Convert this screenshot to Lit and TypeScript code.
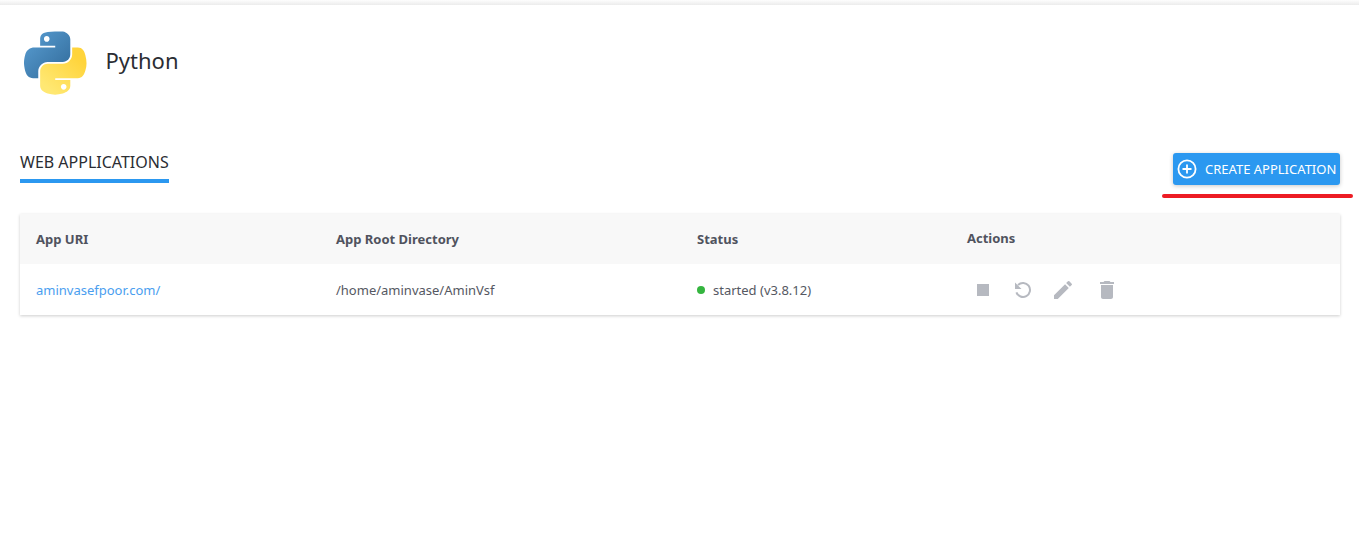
import { LitElement, html, css } from 'lit';
import { customElement } from 'lit/decorators.js';

@customElement('app-root')
export class AppRoot extends LitElement {
  static styles = css`
    :host {
      display: block;
      min-height: 560px;
      background: #fff;
      font-family: 'Noto Sans', sans-serif;
      color: #4a4d57;
    }
    .topbar {
      height: 5px;
      background: linear-gradient(#fdfdfd, #ececec);
    }
    .title-row {
      display: flex;
      align-items: center;
      gap: 18.5px;
      padding: 26px 20px 0 24px;
      height: 64px;
    }
    .logo {
      width: 63px;
      height: 65px;
      display: block;
    }
    .title {
      font-size: 22px;
      color: #2b2d33;
      line-height: 30px;
      margin-top: -7px;
    }
    .section {
      display: flex;
      justify-content: space-between;
      align-items: flex-start;
      padding: 0 19px 0 20px;
      margin-top: 52px;
    }
    .tab {
      margin-top: 4px;
      font-size: 16px;
      line-height: 22px;
      padding-bottom: 6px;
      color: #2b2d33;
      border-bottom: 4px solid #2b98f0;
    }
    .create-wrap {
      position: relative;
      margin-top: 6px;
    }
    .create {
      display: flex;
      align-items: center;
      gap: 8px;
      width: 167px;
      height: 32px;
      box-sizing: border-box;
      padding: 0 0 0 4px;
      border: none;
      border-radius: 3px;
      background: #2b98f0;
      color: #fff;
      font: 13px 'Noto Sans', sans-serif;
      white-space: nowrap;
      box-shadow: 0 1px 4px rgba(0, 0, 0, 0.22);
    }
    .create svg {
      width: 20px;
      height: 20px;
      flex: none;
    }
    .annotation {
      position: absolute;
      left: -11px;
      top: 41px;
      width: 191px;
      height: 4px;
      border-radius: 2px;
      background: #ed1c24;
    }
    .table {
      margin: 29px 19px 0 20px;
      box-shadow: 0 1px 3px rgba(0, 0, 0, 0.2);
      font-size: 13px;
    }
    .row {
      display: grid;
      grid-template-columns: 300px 361px 270px 1fr;
      align-items: center;
      padding-left: 16px;
      box-sizing: border-box;
    }
    .head {
      height: 50px;
      background: #f8f8f8;
      font-weight: 700;
      color: #50535e;
    }
    .head .last {
      padding-bottom: 2px;
    }
    .body {
      height: 51px;
      background: #fff;
      color: #555862;
    }
    .link {
      color: #4a9eef;
      text-decoration: none;
    }
    .status {
      display: flex;
      align-items: center;
      gap: 8px;
    }
    .dot {
      width: 8px;
      height: 8px;
      border-radius: 50%;
      background: #35b53f;
    }
    .actions {
      display: flex;
      align-items: center;
      gap: 16px;
      margin-left: 4px;
    }
    .actions svg {
      width: 24px;
      height: 24px;
      fill: #b6b9c0;
      display: block;
    }
    .actions svg.trash {
      margin-left: 4px;
    }
  `;

  render() {
    return html`
      <div class="topbar"></div>
      <div class="title-row">
        <svg class="logo" viewBox="0 0 112 114">
          <defs>
            <linearGradient id="pyBlue" x1="0" y1="0" x2="1" y2="1">
              <stop offset="0" stop-color="#5a9fd4" />
              <stop offset="1" stop-color="#306998" />
            </linearGradient>
            <linearGradient id="pyYellow" x1="0.2" y1="0.9" x2="0.8" y2="0.2">
              <stop offset="0" stop-color="#ffe873" />
              <stop offset="1" stop-color="#ffd43b" />
            </linearGradient>
          </defs>
          <path
            fill="url(#pyBlue)"
            d="M54.92 0C50.34.02 45.96.41 42.11 1.09 30.76 3.1 28.7 7.29 28.7 15.03v10.22h26.81v3.41H18.64c-7.79 0-14.62 4.68-16.75 13.59-2.46 10.21-2.57 16.59 0 27.25 1.91 7.94 6.46 13.59 14.25 13.59h9.22v-12.25c0-8.85 7.66-16.66 16.75-16.66h26.78c7.45 0 13.41-6.14 13.41-13.62V14.03c0-7.27-6.13-12.72-13.41-13.94C64.28.33 59.5-.02 54.92 0Zm-14.5 8.22c2.77 0 5.03 2.3 5.03 5.12 0 2.82-2.26 5.1-5.03 5.1-2.78 0-5.03-2.28-5.03-5.1 0-2.82 2.25-5.12 5.03-5.12Z"
          />
          <path
            fill="url(#pyYellow)"
            d="M85.64 28.66v11.9c0 9.24-7.83 17-16.75 17H42.11c-7.34 0-13.41 6.28-13.41 13.63v25.53c0 7.27 6.32 11.54 13.41 13.63 8.49 2.49 16.62 2.94 26.78 0 6.75-1.96 13.41-5.89 13.41-13.63V86.5H55.52v-3.4h40.19c7.79 0 10.7-5.44 13.4-13.6 2.8-8.4 2.74-16.47 0-27.25-1.92-7.76-5.6-13.59-13.4-13.59Zm-15.06 64.66c2.78 0 5.03 2.27 5.03 5.09 0 2.82-2.25 5.12-5.03 5.12-2.77 0-5.03-2.3-5.03-5.12 0-2.82 2.26-5.09 5.03-5.09Z"
          />
        </svg>
        <span class="title">Python</span>
      </div>

      <div class="section">
        <div class="tab">WEB APPLICATIONS</div>
        <div class="create-wrap">
          <button class="create">
            <svg viewBox="0 0 20 20" fill="none" stroke="#fff" stroke-width="1.8">
              <circle cx="10" cy="10" r="8.6" />
              <path d="M10 5.5v9M5.5 10h9" />
            </svg>
            CREATE APPLICATION
          </button>
          <div class="annotation"></div>
        </div>
      </div>

      <div class="table">
        <div class="row head">
          <div>App URI</div>
          <div>App Root Directory</div>
          <div>Status</div>
          <div class="last">Actions</div>
        </div>
        <div class="row body">
          <div><a class="link" href="#">aminvasefpoor.com/</a></div>
          <div>/home/aminvase/AminVsf</div>
          <div class="status"><span class="dot"></span>started (v3.8.12)</div>
          <div class="actions">
            <svg viewBox="0 0 24 24"><path d="M6 6h12v12H6z" /></svg>
            <svg viewBox="0 0 24 24">
              <path d="M7 7A7 7 0 1 1 5.4 14.3" fill="none" stroke="#b6b9c0" stroke-width="2" />
              <path d="M4 4.5V11h6.5z" />
            </svg>
            <svg viewBox="0 0 24 24"><path d="M3 17.25V21h3.75L17.81 9.94l-3.75-3.75L3 17.25zM20.71 7.04a1 1 0 0 0 0-1.41l-2.34-2.34a1 1 0 0 0-1.41 0l-1.83 1.83 3.75 3.75 1.83-1.83z" /></svg>
            <svg class="trash" viewBox="0 0 24 24"><path d="M6 19c0 1.1.9 2 2 2h8c1.1 0 2-.9 2-2V7H6v12zM19 4h-3.5l-1-1h-5l-1 1H5v2h14V4z" /></svg>
          </div>
        </div>
      </div>
    `;
  }
}
